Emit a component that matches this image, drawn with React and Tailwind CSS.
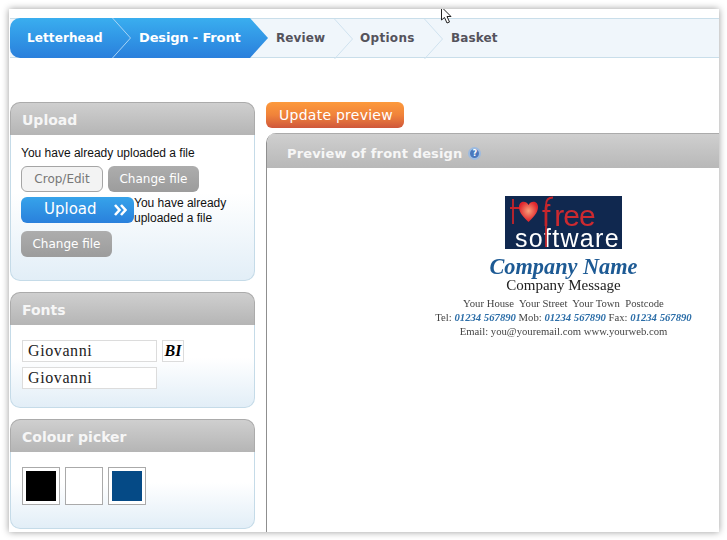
const sans = "font-['DejaVu_Sans',sans-serif]";
const arial = "font-['Liberation_Sans',Arial,sans-serif]";
const serif = "font-['Liberation_Serif','Times_New_Roman',serif]";

const greyBtn =
  "flex h-[26px] items-center justify-center rounded-[6px] bg-gradient-to-b from-[#adadad] to-[#9c9c9c] text-[12px] text-white";

function Chevron({ color, x }) {
  // thin divider between two steps
  return (
    <svg className="absolute top-0" style={{ left: x }} width="19" height="40" viewBox="0 0 19 40" fill="none">
      <path d="M0.5 0 L18.5 20 L0.5 40" stroke={color} strokeWidth="1" />
    </svg>
  );
}

function Stepper() {
  return (
    <div className={`relative ml-px mt-[9px] flex h-10 border-y border-[#c9deea] bg-[#f0f6fb] text-[12px] font-bold tracking-[0.1px] ${sans}`}>
      <div className="relative -my-px flex h-10 w-[240px] items-center whitespace-nowrap rounded-l-[10px] bg-gradient-to-b from-[#3aaeef] to-[#2a7fdc] text-white">
        <span className="ml-[17px] w-[112px]">Letterhead</span>
        <span className="text-[13px] tracking-[-0.15px]">Design - Front</span>
        <Chevron color="#a8d4f5" x={102} />
        <svg className="absolute left-full top-0" width="18" height="40" viewBox="0 0 18 40">
          <defs>
            <linearGradient id="tip" x1="0" y1="0" x2="0" y2="1">
              <stop offset="0" stopColor="#3aaeef" />
              <stop offset="1" stopColor="#2a7fdc" />
            </linearGradient>
          </defs>
          <path d="M0 0 L18 20 L0 40 Z" fill="url(#tip)" />
        </svg>
      </div>
      <div className="flex items-center pl-[26px] text-[#55535c]">
        <span className="w-[84px]">Review</span>
        <span className="w-[91px] tracking-[0.3px]">Options</span>
        <span>Basket</span>
      </div>
      <Chevron color="#cfe2ef" x={324} />
      <Chevron color="#cfe2ef" x={414} />
    </div>
  );
}

function Panel({ title, className, children }) {
  return (
    <section className={`flex w-[245px] flex-col rounded-[10px] ${className}`}>
      <h2 className={`flex h-[33px] shrink-0 items-center rounded-t-[10px] border-x border-t border-[#ababab] bg-gradient-to-b from-[#cfcfcf] to-[#b5b5b5] pl-[11px] pt-[3px] text-[14px] font-bold text-[#f6f6f6] ${sans}`}>
        {title}
      </h2>
      <div className="flex-1 rounded-b-[10px] border-x border-b border-[#c5dbe8] bg-gradient-to-b from-white from-40% to-[#e2eef7] pl-[10px]">
        {children}
      </div>
    </section>
  );
}

function UploadPanel() {
  return (
    <Panel title="Upload" className="h-[179px]">
      <p className={`mt-[11px] text-[12px] leading-[14px] text-[#111] ${arial}`}>You have already uploaded a file</p>
      <div className={`mt-[6px] flex gap-[5px] ${sans}`}>
        <button className="flex h-[26px] w-[82px] items-center justify-center rounded-[6px] border border-[#a5a5a5] bg-[#f3f3f3] text-[12px] text-[#777]">
          Crop/Edit
        </button>
        <button className={`${greyBtn} w-[91px]`}>Change file</button>
      </div>
      <div className="mt-[5px] flex h-[26px]">
        <button className={`relative flex h-[26px] w-[113px] shrink-0 items-center rounded-[6px] bg-gradient-to-b from-[#36a3ea] to-[#2a80dc] pb-px pl-[23px] text-[15px] text-white ${sans}`}>
          Upload
          <svg className="absolute left-[93px] top-[7px]" width="13" height="12" viewBox="0 0 13 12" fill="none" stroke="#fff" strokeWidth="2.6">
            <path d="M1 1 L5.5 6 L1 11" />
            <path d="M7 1 L11.5 6 L7 11" />
          </svg>
        </button>
        <p className={`-mt-px w-[105px] text-[12px] leading-[15px] text-[#111] ${arial}`}>You have already uploaded a file</p>
      </div>
      <button className={`${greyBtn} mt-[8px] w-[91px] ${sans}`}>Change file</button>
    </Panel>
  );
}

function FontBox({ children }) {
  return (
    <div className={`flex h-[22px] w-[135px] items-center border border-[#dcdcdc] bg-white pl-[5px] text-[16px] tracking-[0.6px] text-[#222] ${serif}`}>
      {children}
    </div>
  );
}

function FontsPanel() {
  return (
    <Panel title="Fonts" className="mt-[11px] h-[116px]">
      <div className="mt-[15px] flex gap-[5px] pl-px">
        <FontBox>Giovanni</FontBox>
        <div className={`flex h-[22px] w-[22px] items-center justify-center border border-[#dcdcdc] bg-white text-[16px] font-bold italic text-black ${serif}`}>
          BI
        </div>
      </div>
      <div className="mt-[5px] pl-px">
        <FontBox>Giovanni</FontBox>
      </div>
    </Panel>
  );
}

function Swatch({ className }) {
  return (
    <div className="h-[38px] w-[38px] border border-[#aaaaaa] bg-white p-[3px]">
      <div className={`h-[30px] w-[30px] ${className}`} />
    </div>
  );
}

function ColourPanel() {
  return (
    <Panel title="Colour picker" className="mt-[11px] h-[110px]">
      <div className="mt-[15px] flex gap-[5px] pl-px">
        <Swatch className="bg-black" />
        <Swatch className="bg-white" />
        <Swatch className="bg-[#054a86]" />
      </div>
    </Panel>
  );
}

function Logo() {
  return (
    <div className={`relative h-[53px] w-[117px] overflow-hidden bg-[#10284f] ${arial}`}>
      <span className="absolute left-[10px] top-[31px] text-[25px] leading-[22px] tracking-[1.3px] text-white">software</span>
      <span className="absolute left-[37px] top-[9px] text-[30px] leading-[22px] tracking-[-1px] text-[#cc2a30]">
        <span className="mr-[5px]">f</span>ree
      </span>
      <svg className="absolute left-0 top-0" width="60" height="53" viewBox="0 0 60 53" fill="none">
        <defs>
          <radialGradient id="heart" cx="0.5" cy="0.45" r="0.5">
            <stop offset="0" stopColor="#f9a07a" />
            <stop offset="1" stopColor="#e0252c" />
          </radialGradient>
        </defs>
        <path d="M8 3 V28 M5 12 H15" stroke="#c4242b" strokeWidth="1.8" />
        <path d="M23.5 26 C16 19 14 15 14 11 C14 5 21 4 23.5 9 C26 4 33 5 33 11 C33 15 31 19 23.5 26 Z" fill="url(#heart)" />
        <path d="M48 1.5 C43 1.5 41 4 41 9 V51" stroke="#c4242b" strokeWidth="1.8" />
      </svg>
    </div>
  );
}

function Preview() {
  return (
    <div className="flex w-[593px] flex-col items-center pt-[28px] blur-[0.3px]">
      <Logo />
      <p className={`mt-[7px] text-[22.3px] font-bold italic leading-[21px] text-[#1d5a94] ${serif}`}>Company Name</p>
      <p className={`text-[15px] leading-[16px] text-[#222] ${serif}`}>Company Message</p>
      <div className={`mt-[3px] text-center text-[10.7px] leading-[14px] text-[#444] ${serif}`}>
        <p className="whitespace-pre">Your House  Your Street  Your Town  Postcode</p>
        <p>
          Tel: <b className="italic text-[#2c6ea8]">01234 567890</b> Mob: <b className="italic text-[#2c6ea8]">01234 567890</b> Fax: <b className="italic text-[#2c6ea8]">01234 567890</b>
        </p>
        <p>Email: you@youremail.com www.yourweb.com</p>
      </div>
    </div>
  );
}

function HelpIcon() {
  return (
    <span className={`ml-[6px] flex h-[13px] w-[13px] items-center justify-center rounded-full border-2 border-[#9dbbe0] bg-[#4a78bd] text-[8px] font-bold leading-none text-white ${sans}`}>
      ?
    </span>
  );
}

export default function App() {
  return (
    <div className="h-[540px] w-[727px] overflow-hidden bg-white pl-[9px] pt-[9px]">
      <div className="relative h-[523px] w-[710px] overflow-hidden bg-white shadow-[0_0_7px_rgba(0,0,0,0.4)]">
        <Stepper />
        <div className="ml-px mt-[44px] flex gap-[11px]">
          <aside className="w-[245px] shrink-0">
            <UploadPanel />
            <FontsPanel />
            <ColourPanel />
          </aside>
          <main className="min-w-0 flex-1">
            <button className={`flex h-[26px] w-[138px] items-center justify-center rounded-[6px] bg-gradient-to-b from-[#fd9a3c] via-[#f0833a] to-[#cf563a] pl-[2px] text-[14px] tracking-[0.25px] text-white ${sans}`}>
              Update preview
            </button>
            <div className="mt-[5px] h-[400px] overflow-hidden rounded-tl-[10px] border-l border-[#8f8f8f]">
              <h2 className={`flex h-[35px] items-center border-t border-[#ababab] bg-gradient-to-b from-[#cfcfcf] to-[#b8b8b8] pl-[20px] pt-[5px] text-[13px] font-bold tracking-[0.15px] text-[#f6f6f6] ${sans}`}>
                Preview of front design
                <HelpIcon />
              </h2>
              <Preview />
            </div>
          </main>
        </div>
        <svg className="absolute left-[432px] top-0" width="14" height="16" viewBox="0 0 14 16" fill="#fff" stroke="#222" strokeWidth="1">
          <path d="M0.5 -2 V11 L3.5 8.5 L6 14 L8.5 13 L6 7.5 L10 7.5 Z" />
        </svg>
      </div>
    </div>
  );
}
